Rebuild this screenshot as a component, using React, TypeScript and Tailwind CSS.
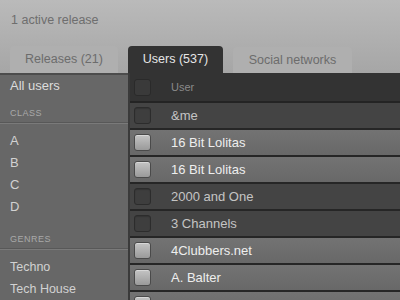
import React from "react";

const font = { fontFamily: '"Liberation Sans", Arial, sans-serif' };

type Row = { name: string; light: boolean };
const rows: Row[] = [
  { name: "&me", light: false },
  { name: "16 Bit Lolitas", light: true },
  { name: "16 Bit Lolitas", light: true },
  { name: "2000 and One", light: false },
  { name: "3 Channels", light: false },
  { name: "4Clubbers.net", light: true },
  { name: "A. Balter", light: true },
  { name: "", light: true },
];

function Check({ light }: { light: boolean }) {
  return light ? (
    <div className="w-[17px] h-[17px] rounded-[3px] border border-[#4a4a4a] bg-gradient-to-b from-[#c4c4c4] to-[#9a9a9a] shadow-[inset_0_1px_0_#d8d8d8] shrink-0" />
  ) : (
    <div className="w-[17px] h-[17px] rounded-[3px] border border-[#2c2c2c] bg-[#3e3e3e] shadow-[inset_0_1px_1px_#333] shrink-0" />
  );
}

function Sep() {
  return (
    <div className="h-[2px] flex flex-col">
      <div className="h-px bg-[#585858]" />
      <div className="h-px bg-[#7a7a7a]" />
    </div>
  );
}

export default function App() {
  return (
    <div className="w-[400px] h-[300px] overflow-hidden flex flex-col bg-[#666]" style={font}>
      <div className="h-[73px] shrink-0 bg-gradient-to-b from-[#bababa] to-[#a6a6a6] flex flex-col">
        <div className="h-[46px] pl-[11px] pt-[12px] text-[12.5px] leading-[16px] text-[#6e6e6e]">
          1 active release
        </div>
        <div className="flex items-end gap-[10px] pl-[10px] h-[27px]">
          <div className="w-[108px] h-[27px] rounded-t-[4px] bg-[#afafaf] text-[#6c6c6c] text-[12.5px] flex items-center justify-center">
            Releases (21)
          </div>
          <div className="w-[95px] h-[27px] rounded-t-[4px] bg-[#333] text-[#e6e6e6] text-[12.5px] flex items-center justify-center">
            Users (537)
          </div>
          <div className="w-[119px] h-[26px] rounded-t-[4px] bg-[#afafaf] text-[#6c6c6c] text-[12.5px] flex items-center justify-center">
            Social networks
          </div>
        </div>
      </div>
      <div className="flex flex-1 min-h-0">
        <div className="w-[128px] shrink-0 bg-[#676767] border-t-2 border-[#4c4c4c] flex flex-col">
          <div className="h-[22px] pl-[10px] flex items-center text-[13px] text-[#dcdcdc]">All users</div>
          <div className="h-[26px] pl-[10px] flex items-end pb-[3px] text-[9px] leading-[11px] tracking-[0.5px] text-[#a9a9a9]">
            CLASS
          </div>
          <Sep />
          <div className="pt-[6px] flex flex-col">
            {["A", "B", "C", "D"].map((l) => (
              <div key={l} className="h-[22px] pl-[10px] flex items-center text-[13px] text-[#d2d2d2]">
                {l}
              </div>
            ))}
          </div>
          <div className="h-[31px] pl-[10px] flex items-end pb-[3px] text-[9px] leading-[11px] tracking-[0.5px] text-[#a9a9a9]">
            GENRES
          </div>
          <Sep />
          <div className="pt-[6px] flex flex-col">
            {["Techno", "Tech House"].map((l) => (
              <div key={l} className="h-[22px] pl-[10px] flex items-center text-[12.5px] text-[#d2d2d2]">
                {l}
              </div>
            ))}
          </div>
        </div>
        <div className="w-[2px] shrink-0 bg-[#3a3a3a]" />
        <div className="flex-1 flex flex-col bg-[#333]">
          <div className="h-[30px] shrink-0 flex items-center pl-[4px] bg-[#333] border-b-2 border-[#242424]">
            <div className="w-[17px] h-[17px] rounded-[3px] border border-[#2a2a2a] bg-[#3a3a3a] shrink-0" />
            <span className="ml-[20px] text-[11px] text-[#8a8a8a]">User</span>
          </div>
          {rows.map((r, i) => (
            <div
              key={i}
              className={
                "h-[27px] shrink-0 flex items-center pl-[4px] border-b-2 border-[#262626] " +
                (r.light
                  ? "bg-gradient-to-b from-[#737373] to-[#686868]"
                  : "bg-[#444]")
              }
            >
              <Check light={r.light} />
              <span className={"ml-[20px] text-[13px] " + (r.light ? "text-[#eeeeee]" : "text-[#c4c4c4]")}>
                {r.name}
              </span>
            </div>
          ))}
        </div>
      </div>
    </div>
  );
}
